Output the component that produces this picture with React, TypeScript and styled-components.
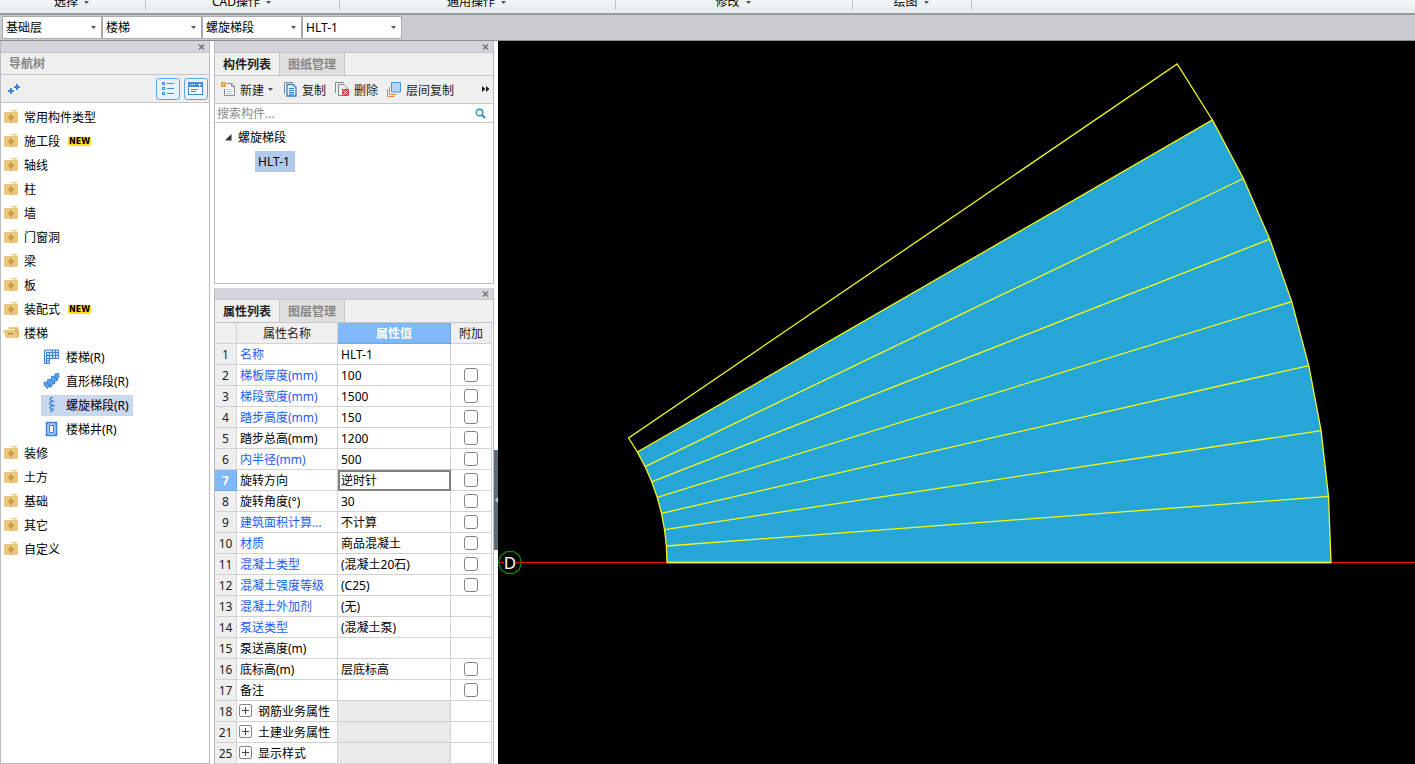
import React from "react";
import styled, { createGlobalStyle, css } from "styled-components";

const GlobalStyle = createGlobalStyle`
  *, *::before, *::after { box-sizing: border-box; }
  body {
    margin: 0;
    background: #fff;
    color: #000;
    font: 12px/20px "Noto Sans", "Noto Sans CJK SC", sans-serif;
  }
  button, input, select {
    margin: 0;
    padding: 0;
    border: 0;
    background: none;
    color: inherit;
    font: inherit;
  }
  ul { margin: 0; padding: 0; list-style: none; }
  svg { display: block; flex: none; }
`;

/* ---------- frame ---------- */

const Page = styled.div`
  display: flex;
  flex-direction: column;
  min-height: 100vh;
`;

const Ribbon = styled.nav`
  display: flex;
  height: 13px;
  overflow: hidden;
  background: linear-gradient(#f2f6f7, #e6eced);
`;

const RibbonGroup = styled.div<{ $width: number }>`
  display: flex;
  justify-content: center;
  align-items: flex-end;
  width: ${(p) => p.$width}px;
  padding: 0 3px 1px 0;
  background: linear-gradient(#bfc4c8, #bfc4c8) right top / 1px 10px no-repeat;
`;

const RibbonButton = styled.button`
  display: flex;
  align-items: center;
  gap: 6px;
  white-space: nowrap;
`;

const SelectorBar = styled.div`
  display: flex;
  height: 28px;
  padding: 1px 2px;
  border-top: 2px solid #96999e;
  border-bottom: 1px solid #8b8f97;
  background: #c9ccd1;
`;

const SelectBox = styled.label`
  position: relative;
  width: 100px;
  height: 23px;
  svg {
    position: absolute;
    right: 6px;
    top: 10px;
    pointer-events: none;
  }
`;

const Select = styled.select`
  appearance: none;
  display: block;
  width: 100%;
  height: 100%;
  padding: 0 16px 0 3px;
  border: 1px solid #a9abae;
  background: #fff;
`;

const Workspace = styled.main`
  flex: 1;
  display: grid;
  grid-template-columns: 214px 280px 4px minmax(0, 1fr);
`;

const Panel = styled.section<{ $grow?: boolean; $flush?: boolean }>`
  display: flex;
  flex-direction: column;
  flex: ${(p) => (p.$grow ? "1 0 auto" : "none")};
  border: 1px solid #b9bbc2;
  border-top: 0;
  border-bottom-width: ${(p) => (p.$flush ? 0 : 1)}px;
  background: #fff;
`;

const PanelStack = styled.div`
  display: flex;
  flex-direction: column;
  gap: 4px;
`;

const WorkspaceNav = styled.aside`
  display: flex;
  flex-direction: column;
  padding-right: 4px;
`;

const GripBar = styled.div`
  display: flex;
  justify-content: flex-end;
  align-items: center;
  height: 12px;
  padding-right: 4px;
  border-bottom: 1px solid #c4c6cc;
  background: #d3d5da;
`;

const CloseButton = styled.button`
  display: grid;
  place-items: center;
  width: 7px;
  height: 9px;
`;

const PanelTitle = styled.h2`
  height: 22px;
  margin: 0;
  padding-left: 8px;
  border-bottom: 1px solid #c4c6cc;
  background: #efefef;
  color: #868686;
  font-size: 12px;
  font-weight: 700;
  line-height: 22px;
`;

const ToolRow = styled.div<{ $spread?: boolean }>`
  display: flex;
  align-items: center;
  justify-content: ${(p) => (p.$spread ? "space-between" : "flex-start")};
  height: 28px;
  padding: 0 1px 0 6px;
  border-bottom: 1px solid #c4c6cc;
  background: #efefef;
  color: #222;
`;

const Label = styled.span`
  padding-top: 2px;
`;

/* ---------- navigation tree ---------- */

const ViewButtons = styled.div`
  display: flex;
  gap: 4px;
`;

const ViewButton = styled.button`
  display: grid;
  place-items: center;
  width: 24px;
  height: 22px;
  border: 1px solid #5aa5f0;
  border-radius: 3px;
  background: #e9f3fe;
`;

const Tree = styled.ul`
  padding-top: 2px;
`;

const TreeRow = styled.li`
  display: flex;
  align-items: center;
  height: 24px;
  padding-left: 1px;
`;

const TreeButton = styled.button<{ $child?: boolean; $selected?: boolean }>`
  display: flex;
  align-items: center;
  gap: 4px;
  height: 21px;
  white-space: nowrap;
  ${(p) =>
    p.$child &&
    css`
      gap: 6px;
      margin-left: 39px;
      padding: 0 4px 0 2px;
    `}
  background: ${(p) => (p.$selected ? "#c9d8ef" : "none")};
`;

const NewBadge = styled.span`
  margin-left: 4px;
  padding: 0 1px;
  border-radius: 2px;
  background: #ffe01f;
  font: 700 8px/9px "DejaVu Sans", sans-serif;
`;

/* ---------- component list ---------- */

const Tabs = styled.div`
  display: flex;
  height: 23px;
  border-bottom: 1px solid #c4c6cc;
  background: #efefef;
`;

const Tab = styled.button<{ $active?: boolean }>`
  width: 65px;
  padding-top: 1px;
  border-right: 1px solid #c4c6cc;
  background: ${(p) => (p.$active ? "#efefef" : "#dfdfdf")};
  color: ${(p) => (p.$active ? "#222" : "#868686")};
  font-weight: 700;
  line-height: 21px;
  white-space: nowrap;
`;

const ToolButton = styled.button<{ $gap?: number }>`
  display: flex;
  align-items: center;
  gap: 4px;
  margin-right: ${(p) => p.$gap ?? 9}px;
  white-space: nowrap;
`;

const MoreButton = styled.button`
  margin-left: auto;
`;

const SearchRow = styled.label`
  display: flex;
  align-items: center;
  height: 19px;
  padding: 0 7px 0 2px;
  border-bottom: 1px solid #c4c6cc;
`;

const SearchInput = styled.input`
  flex: 1;
  min-width: 0;
  height: 18px;
  padding-top: 1px;
  outline: 0;
  &::placeholder { color: #8a8a8a; opacity: 1; }
`;

const ComponentTree = styled.ul`
  min-height: 120px;
  padding: 2px 0 0 10px;
`;

const ComponentRow = styled.li<{ $leaf?: boolean }>`
  display: flex;
  align-items: center;
  gap: 6px;
  height: 24px;
  padding-left: ${(p) => (p.$leaf ? 30 : 0)}px;
`;

const ComponentItem = styled.button`
  height: 21px;
  padding: 1px 5px 0 3px;
  background: #b1c9ea;
`;

/* ---------- property table ---------- */

const Table = styled.table`
  width: 277px;
  table-layout: fixed;
  border-spacing: 0;
  white-space: nowrap;
  th, td {
    height: 21px;
    padding: 2px 0 0;
    border-right: 1px solid #d2d2d4;
    border-bottom: 1px solid #d2d2d4;
    line-height: 18px;
    font-weight: 400;
  }
`;

const HeadCell = styled.th<{ $selected?: boolean }>`
  background: #efefef;
  color: #222;
  text-align: center;
  ${(p) =>
    p.$selected &&
    css`
      && {
        border-color: #6aa9ee;
        background: #7fb9fa;
        color: #fff;
        font-weight: 700;
      }
    `}
`;

const NameCell = styled.td<{ $linked?: boolean }>`
  && { padding-left: 3px; }
  color: ${(p) => (p.$linked ? "#1a5cff" : "#000")};
`;

const ValueCell = styled.td<{ $current?: boolean; $muted?: boolean }>`
  && { padding-left: 3px; }
  background: ${(p) => (p.$muted ? "#eaeaea" : "#fff")};
  ${(p) =>
    p.$current &&
    css`
      outline: 2px solid #808080;
      outline-offset: -2px;
    `}
`;

const CheckCell = styled.td`
  && { padding-top: 0; }
  vertical-align: middle;
`;

const CheckBox = styled.input`
  appearance: none;
  display: block;
  width: 14px;
  height: 14px;
  margin: 0 auto;
  border: 1px solid #858585;
  border-radius: 3px;
  background: #fff;
`;

const Group = styled.span`
  display: flex;
  align-items: flex-start;
  gap: 6px;
  margin-left: -1px;
`;

const Expander = styled.button`
  display: grid;
  place-items: center;
  width: 13px;
  height: 13px;
  margin-top: 1px;
  border: 1px solid #858585;
  border-radius: 2px;
`;

/* ---------- drawing area ---------- */

const Splitter = styled.div`
  padding-top: 409px;
`;

const SplitterHandle = styled.button`
  display: grid;
  place-items: center end;
  width: 4px;
  height: 100px;
  background: #5f6b77;
`;

const Canvas = styled.div`
  background: #000;
  svg { width: 100%; height: 100%; min-height: 560px; }
`;

/* ---------- icons ---------- */

const Caret = () => (
  <svg width="5" height="3" viewBox="0 0 5 3"><path d="M0 0h5L2.5 3z" fill="#555" /></svg>
);

const CloseIcon = () => (
  <svg width="7" height="6" viewBox="0 0 7 6">
    <path d="M1 .5l5 5M6 .5l-5 5" stroke="#777" strokeWidth="1.5" />
  </svg>
);

const PlusPairIcon = () => (
  <svg width="14" height="12" viewBox="0 0 14 12" shapeRendering="crispEdges">
    <path d="M1 7h6v2H1zM3 5h2v6H3zM7 3h6v2H7zM9 1h2v6H9z" fill="#3d86d8" />
  </svg>
);

const ListIcon = () => (
  <svg width="14" height="14" viewBox="0 0 14 14" fill="none" stroke="#3d8de0" shapeRendering="crispEdges">
    <path d="M1.500 .5h2v2h-2zM1.500 5.500h2v2h-2zM1.500 10.500h2v2h-2zM6 1.500h7M6 6.500h7M6 11.500h7" />
  </svg>
);

const WindowIcon = () => (
  <svg width="16" height="14" viewBox="0 0 16 14" shapeRendering="crispEdges">
    <path d="M.5.5h14v12H.5z" fill="#fff" stroke="#3d8de0" />
    <path d="M0 0h15v5H0z" fill="#3d8de0" />
    <path d="M2 2h1v1H2zM4 2h1v1H4zM6 2h1v1H6zM10 2h3v1h-3zM11 3h1v1h-1z" fill="#fff" />
    <path d="M3 7.500h7M3 9.500h5" stroke="#3d8de0" />
  </svg>
);

const FolderIcon = ({ open }: { open?: boolean }) =>
  open ? (
    <svg width="18" height="15" viewBox="0 0 18 15">
      <path d="M8 1h8v2h1v8h-2L12 3H6z" fill="#e3b767" />
      <path d="M6 2l2-1h8v2z" fill="#edc67d" />
      <path d="M1 4h11.500L16 12H4z" fill="#edc67d" />
      <path d="M6 7h5v1.500H6z" fill="#b98e3c" />
    </svg>
  ) : (
    <svg width="18" height="15" viewBox="0 0 18 15">
      <path d="M9 1.500Q9.500 0 11 0h3q1 0 1.500 1.500z" fill="#edc67d" />
      <rect x="2" y="2" width="14" height="11" rx="1" fill="#edc67d" />
      <path d="M6 6.500h2v-2h2v2h2v2h-2v2H8v-2H6z" fill="#c4993f" />
    </svg>
  );

type ChildIconName = "stairs" | "straight" | "spiral" | "well";

const ChildIcon = ({ name }: { name: ChildIconName }) => (
  <svg width="17" height="16" viewBox="0 0 17 16" fill="none" stroke="#3b82d0">
    {name === "stairs" && (
      <>
        <path d="M1.500 1h14v8.500h-9v5h-5z" fill="#cfe4fb" />
        <path d="M3.500 14V3.500H15M6.500 9V3.500M9.500 9V1M12.500 9V1M3.500 6.500h12M3.500 9.500h3M3.500 12h3" />
      </>
    )}
    {name === "straight" && (
      <>
        <path
          d="M1 9l3 .5 1-3.500 3 1 .5-4 3 1L12 1l3.500-.5.5 4-2 .5.500 2.500-3 .5.500 2.500-3 .5-.5 3-2.500-.5L4.500 15.500 1.500 12.500z"
          fill="#5aa3ee"
        />
        <path d="M4.500 10l2.500 3M8.500 7l2.500 3M12 4l2 2.500" stroke="#2f73c4" />
      </>
    )}
    {name === "spiral" && (
      <path
        d="M10 .5Q6.500 1 7.200 2.500T11 4.500Q6 5 6.500 6.500T11.500 8.500Q6.500 9.300 7 10.800T11 12.500Q8 13 7.500 15"
        stroke="#2f7fd3"
        strokeWidth="1.200"
      />
    )}
    {name === "well" && (
      <>
        <path d="M3.500 1.500h10v13h-10z" fill="#a5cdf8" strokeWidth="1.500" />
        <path d="M6.500 4.500h4v7h-4z" fill="#fff" />
        <path d="M4 2l2.500 2.500M13 2l-2.500 2.500M4 14l2.500-2.500M13 14l-2.500-2.500" strokeWidth=".6" />
      </>
    )}
  </svg>
);

const NewIcon = () => (
  <svg width="15" height="15" viewBox="0 0 15 15" fill="none">
    <path d="M6 1.500h4.500l3 3v9h-10V7" fill="#f7f8f8" stroke="#7f8b93" />
    <path d="M10.500 1.500v3h3" stroke="#7f8b93" />
    <path d="M5.500 7.500h6M5.500 9.500h6M5.500 11.500h6" stroke="#c4cbd0" />
    <path d="M0 0h5v5H0z" fill="#fbc98c" />
    <path d="M0 0h1v1H0zM2 0h1v1H2zM4 0h1v1H4zM1 1h1v1H1zM3 1h1v1H3zM0 2h1v1H0zM4 2h1v1H4zM1 3h1v1H1zM3 3h1v1H3zM0 4h1v1H0zM2 4h1v1H2zM4 4h1v1H4z" fill="#ef7d0c" />
  </svg>
);

const CopyIcon = () => (
  <svg width="14" height="15" viewBox="0 0 14 15" fill="none">
    <path d="M.5 12V.5H9" stroke="#7f8b93" />
    <path d="M3 2.500h6l3 3V14H3z" fill="#e8f2fd" stroke="#2f7fd3" strokeWidth="1.300" />
    <path d="M5 6.500h5M5 8.500h5M5 10.500h5M5 12.200h5" stroke="#2f7fd3" />
  </svg>
);

const DeleteIcon = () => (
  <svg width="15" height="15" viewBox="0 0 15 15" fill="none">
    <path d="M.5 11V.5H9" stroke="#7f8b93" />
    <path d="M7 13.500H3.500v-11H9l3 3V7" stroke="#7f8b93" />
    <rect x="7" y="7" width="7" height="7" fill="#d84a4a" />
    <path d="M8.500 8.500l4 4M12.500 8.500l-4 4" stroke="#fff" />
  </svg>
);

const LayersIcon = () => (
  <svg width="15" height="15" viewBox="0 0 15 15" fill="none">
    <path d="M.5 7v7.500H7M2.500 5v7.500H9" stroke="#ef7f2b" />
    <path d="M4.500.5h9v9.500h-9z" fill="#b5d6fb" stroke="#4a94e6" />
  </svg>
);

const MoreIcon = () => (
  <svg width="10" height="7" viewBox="0 0 10 7"><path d="M0 0l3.500 3L0 6zM4 0l3.500 3L4 6z" fill="#222" /></svg>
);

const SearchIcon = () => (
  <svg width="11" height="11" viewBox="0 0 11 11" fill="none" stroke="#2b8cc4">
    <circle cx="4.500" cy="4.500" r="3.300" strokeWidth="1.400" />
    <path d="M7 7l3 3" strokeWidth="2" />
  </svg>
);

/* ---------- data ---------- */

const ribbonGroups = [
  { label: "选择", width: 146 },
  { label: "CAD操作", width: 194 },
  { label: "通用操作", width: 276 },
  { label: "修改", width: 237 },
  { label: "绘图", width: 119 },
];

const selectors = [
  { label: "楼层", value: "基础层" },
  { label: "构件大类", value: "楼梯" },
  { label: "构件类型", value: "螺旋梯段" },
  { label: "构件", value: "HLT-1" },
];

interface NavItem {
  label: string;
  badge?: boolean;
  open?: boolean;
  icon?: ChildIconName;
  selected?: boolean;
}

const navItems: NavItem[] = [
  { label: "常用构件类型" },
  { label: "施工段", badge: true },
  { label: "轴线" },
  { label: "柱" },
  { label: "墙" },
  { label: "门窗洞" },
  { label: "梁" },
  { label: "板" },
  { label: "装配式", badge: true },
  { label: "楼梯", open: true },
  { label: "楼梯(R)", icon: "stairs" },
  { label: "直形梯段(R)", icon: "straight" },
  { label: "螺旋梯段(R)", icon: "spiral", selected: true },
  { label: "楼梯井(R)", icon: "well" },
  { label: "装修" },
  { label: "土方" },
  { label: "基础" },
  { label: "其它" },
  { label: "自定义" },
];

interface Property {
  no: number;
  name: string;
  value?: string;
  linked?: boolean;
  check?: boolean;
  current?: boolean;
  group?: boolean;
}

const properties: Property[] = [
  { no: 1, name: "名称", value: "HLT-1", linked: true },
  { no: 2, name: "梯板厚度(mm)", value: "100", linked: true, check: true },
  { no: 3, name: "梯段宽度(mm)", value: "1500", linked: true, check: true },
  { no: 4, name: "踏步高度(mm)", value: "150", linked: true, check: true },
  { no: 5, name: "踏步总高(mm)", value: "1200", check: true },
  { no: 6, name: "内半径(mm)", value: "500", linked: true, check: true },
  { no: 7, name: "旋转方向", value: "逆时针", check: true, current: true },
  { no: 8, name: "旋转角度(°)", value: "30", check: true },
  { no: 9, name: "建筑面积计算...", value: "不计算", linked: true, check: true },
  { no: 10, name: "材质", value: "商品混凝土", linked: true, check: true },
  { no: 11, name: "混凝土类型", value: "(混凝土20石)", linked: true, check: true },
  { no: 12, name: "混凝土强度等级", value: "(C25)", linked: true, check: true },
  { no: 13, name: "混凝土外加剂", value: "(无)", linked: true },
  { no: 14, name: "泵送类型", value: "(混凝土泵)", linked: true },
  { no: 15, name: "泵送高度(m)" },
  { no: 16, name: "底标高(m)", value: "层底标高", check: true },
  { no: 17, name: "备注", check: true },
  { no: 18, name: "钢筋业务属性", group: true },
  { no: 21, name: "土建业务属性", group: true },
  { no: 25, name: "显示样式", group: true },
];

/* ---------- spiral stair plan ---------- */

const CENTER = { x: -52, y: 521.5 };
const INNER = 221;
const OUTER = 885;
const TREADS = 7;
const STEP = Math.PI / 6 / TREADS;

const polar = (radius: number, step: number) =>
  `${(CENTER.x + radius * Math.cos(step * STEP)).toFixed(1)},${(CENTER.y - radius * Math.sin(step * STEP)).toFixed(1)}`;

const range = (n: number) => Array.from({ length: n }, (_, i) => i);

const StairPlan = () => {
  const outer = range(TREADS + 1).map((i) => polar(OUTER, i));
  const inner = range(TREADS + 1).map((i) => polar(INNER, i)).reverse();
  const last = TREADS + 1;
  const bubble = range(10)
    .map((i) => `${(12 + 11.5 * Math.cos((i * Math.PI) / 5)).toFixed(1)},${(521.5 + 11.5 * Math.sin((i * Math.PI) / 5)).toFixed(1)}`)
    .join(" ");
  return (
    <svg role="img" aria-label="螺旋梯段平面图">
      <path d="M0 521.500h6" stroke="#f00" />
      <line x1="18" y1="521.5" x2="100%" y2="521.5" stroke="#f00" />
      <polygon points={bubble} fill="none" stroke="#0a8a0a" strokeWidth="1.2" />
      <text x="12" y="528" fill="#fff" fontSize="17" textAnchor="middle">D</text>
      <polygon points={[...outer, ...inner].join(" ")} fill="#25a6d6" />
      <g fill="none" stroke="#f4f716" strokeWidth="1.3">
        <polygon points={[...outer, ...inner].join(" ")} />
        {range(TREADS).map((i) => (
          <polyline key={i} points={`${polar(INNER, i)} ${polar(OUTER, i)}`} />
        ))}
        <polyline points={`${polar(INNER, TREADS)} ${polar(INNER, last)} ${polar(OUTER, last)} ${polar(OUTER, TREADS)}`} />
      </g>
    </svg>
  );
};

/* ---------- page ---------- */

const Grip = () => (
  <GripBar>
    <CloseButton aria-label="关闭"><CloseIcon /></CloseButton>
  </GripBar>
);

const NavPanel = () => (
  <Panel $grow>
    <Grip />
    <PanelTitle>导航树</PanelTitle>
    <ToolRow $spread>
      <button aria-label="展开全部"><PlusPairIcon /></button>
      <ViewButtons>
        <ViewButton aria-label="列表视图"><ListIcon /></ViewButton>
        <ViewButton aria-label="窗口视图"><WindowIcon /></ViewButton>
      </ViewButtons>
    </ToolRow>
    <Tree>
      {navItems.map((item) => (
        <TreeRow key={item.label}>
          <TreeButton $child={!!item.icon} $selected={item.selected}>
            {item.icon ? <ChildIcon name={item.icon} /> : <FolderIcon open={item.open} />}
            <Label>{item.label}</Label>
            {item.badge && <NewBadge>NEW</NewBadge>}
          </TreeButton>
        </TreeRow>
      ))}
    </Tree>
  </Panel>
);

const ComponentPanel = () => (
  <Panel $grow>
    <Grip />
    <Tabs>
      <Tab $active>构件列表</Tab>
      <Tab>图纸管理</Tab>
    </Tabs>
    <ToolRow>
      <ToolButton $gap={11}><NewIcon /><Label>新建</Label><Caret /></ToolButton>
      <ToolButton><CopyIcon /><Label>复制</Label></ToolButton>
      <ToolButton><DeleteIcon /><Label>删除</Label></ToolButton>
      <ToolButton><LayersIcon /><Label>层间复制</Label></ToolButton>
      <MoreButton aria-label="更多"><MoreIcon /></MoreButton>
    </ToolRow>
    <SearchRow>
      <SearchInput type="text" placeholder="搜索构件..." aria-label="搜索构件" />
      <SearchIcon />
    </SearchRow>
    <ComponentTree>
      <ComponentRow>
        <svg width="7" height="7" viewBox="0 0 7 7"><path d="M6.500 0v6.500H0z" fill="#333" /></svg>
        <Label>螺旋梯段</Label>
      </ComponentRow>
      <ComponentRow $leaf>
        <ComponentItem>HLT-1</ComponentItem>
      </ComponentRow>
    </ComponentTree>
  </Panel>
);

const PropertyPanel = () => (
  <Panel $flush>
    <Grip />
    <Tabs>
      <Tab $active>属性列表</Tab>
      <Tab>图层管理</Tab>
    </Tabs>
    <Table>
      <colgroup>
        <col width="22" />
        <col width="101" />
        <col width="113" />
        <col width="41" />
      </colgroup>
      <thead>
        <tr>
          <HeadCell />
          <HeadCell scope="col">属性名称</HeadCell>
          <HeadCell scope="col" $selected>属性值</HeadCell>
          <HeadCell scope="col">附加</HeadCell>
        </tr>
      </thead>
      <tbody>
        {properties.map((p) => (
          <tr key={p.no}>
            <HeadCell scope="row" $selected={p.current}>{p.no}</HeadCell>
            <NameCell $linked={p.linked}>
              {p.group ? (
                <Group>
                  <Expander aria-label={`展开${p.name}`}>
                    <svg width="7" height="7" viewBox="0 0 7 7"><path d="M0 3.500h7M3.500 0v7" stroke="#444" /></svg>
                  </Expander>
                  {p.name}
                </Group>
              ) : (
                p.name
              )}
            </NameCell>
            <ValueCell $current={p.current} $muted={p.group}>{p.value}</ValueCell>
            <CheckCell>
              {p.check && <CheckBox type="checkbox" aria-label={`附加 ${p.name}`} />}
            </CheckCell>
          </tr>
        ))}
      </tbody>
    </Table>
  </Panel>
);

export default function App() {
  return (
    <Page>
      <GlobalStyle />
      <Ribbon>
        {ribbonGroups.map((g) => (
          <RibbonGroup key={g.label} $width={g.width}>
            <RibbonButton>{g.label}<Caret /></RibbonButton>
          </RibbonGroup>
        ))}
      </Ribbon>
      <SelectorBar>
        {selectors.map((s) => (
          <SelectBox key={s.label}>
            <Select aria-label={s.label}>
              <option>{s.value}</option>
            </Select>
            <Caret />
          </SelectBox>
        ))}
      </SelectorBar>
      <Workspace>
        <WorkspaceNav><NavPanel /></WorkspaceNav>
        <PanelStack>
          <ComponentPanel />
          <PropertyPanel />
        </PanelStack>
        <Splitter>
          <SplitterHandle aria-label="收起面板">
            <svg width="3" height="6" viewBox="0 0 3 6"><path d="M3 0v6L0 3z" fill="#c6ccd2" /></svg>
          </SplitterHandle>
        </Splitter>
        <Canvas><StairPlan /></Canvas>
      </Workspace>
    </Page>
  );
}
